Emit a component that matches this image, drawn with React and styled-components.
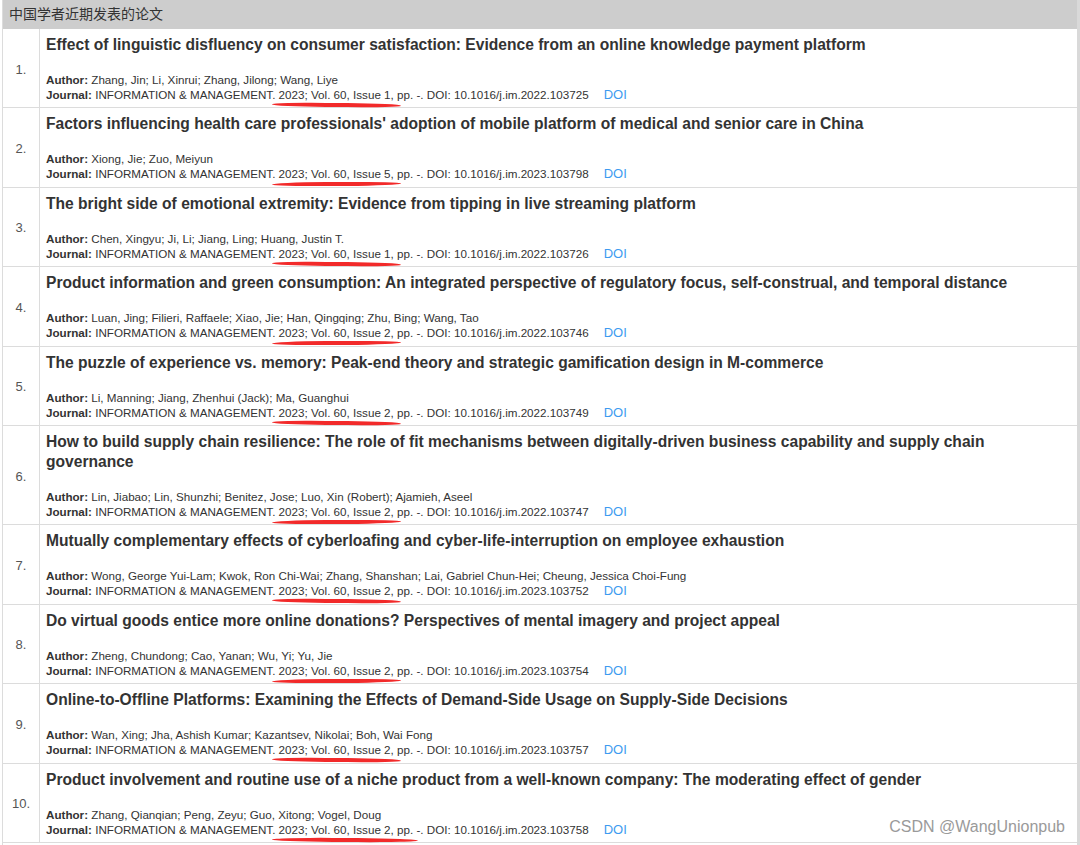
import React from 'react'
import styled, { createGlobalStyle } from 'styled-components'

const GlobalStyle = createGlobalStyle`
  html, body {
    margin: 0;
    padding: 0;
    background: #fff;
    overflow: hidden;
  }
  body {
    font-family: "Liberation Sans", Arial, "Noto Sans CJK SC", sans-serif;
    color: #333;
  }
`

const Page = styled.div`
  position: relative;
  width: 1080px;
  height: 845px;
  display: flex;
`

const Table = styled.div`
  margin-left: 2px;
  width: 1075px;
  border-left: 1px solid #dcdcdc;
  display: flex;
  flex-direction: column;
`

const Scroll = styled.div`
  width: 3px;
  background: #d9d9d9;
`

const Header = styled.div`
  height: 29px;
  background: #cdcdcd;
  font-size: 14px;
  line-height: 29px;
  padding-left: 6px;
  color: #333;
  font-family: "Liberation Sans", "Noto Sans CJK SC", sans-serif;
`

const Row = styled.div`
  display: grid;
  grid-template-columns: 37px 1fr;
  border-bottom: 1px solid #dcdcdc;
`

const Num = styled.div`
  border-right: 1px solid #dcdcdc;
  display: flex;
  align-items: center;
  justify-content: center;
  font-size: 13px;
  color: #555;
  padding-top: 2px;
`

const Body = styled.div`
  padding: 6px 12px 5.4px 6px;
`

const Title = styled.div`
  font-size: 15.6px;
  line-height: 20px;
  font-weight: bold;
  color: #333;
  margin-bottom: 17px;
`

const Line = styled.div`
  font-size: 11.65px;
  line-height: 15px;
  color: #333;
  white-space: nowrap;

  b {
    font-weight: bold;
  }
`

const Marked = styled.span`
  position: relative;

  &::after {
    content: '';
    position: absolute;
    left: -7px;
    right: ${p => p.$extend}px;
    bottom: -6px;
    height: 4px;
    background: #f22a2a;
    border-radius: 50% / 60%;
    transform: rotate(${p => p.$tilt}deg);
  }
`

const DoiLink = styled.a`
  margin-left: 15px;
  font-size: 13px;
  color: #3d9bf0;
  text-decoration: none;
`

const Watermark = styled.div`
  position: absolute;
  right: 15px;
  bottom: 9px;
  font-size: 16px;
  color: #9a9a9a;
  font-family: "Liberation Sans", Arial, sans-serif;
`

const papers = [
  {
    title: 'Effect of linguistic disfluency on consumer satisfaction: Evidence from an online knowledge payment platform',
    authors: 'Zhang, Jin; Li, Xinrui; Zhang, Jilong; Wang, Liye',
    issue: '1',
    doi: '10.1016/j.im.2022.103725',
  },
  {
    title: "Factors influencing health care professionals' adoption of mobile platform of medical and senior care in China",
    authors: 'Xiong, Jie; Zuo, Meiyun',
    issue: '5',
    doi: '10.1016/j.im.2023.103798',
  },
  {
    title: 'The bright side of emotional extremity: Evidence from tipping in live streaming platform',
    authors: 'Chen, Xingyu; Ji, Li; Jiang, Ling; Huang, Justin T.',
    issue: '1',
    doi: '10.1016/j.im.2022.103726',
  },
  {
    title: 'Product information and green consumption: An integrated perspective of regulatory focus, self-construal, and temporal distance',
    authors: 'Luan, Jing; Filieri, Raffaele; Xiao, Jie; Han, Qingqing; Zhu, Bing; Wang, Tao',
    issue: '2',
    doi: '10.1016/j.im.2022.103746',
  },
  {
    title: 'The puzzle of experience vs. memory: Peak-end theory and strategic gamification design in M-commerce',
    authors: 'Li, Manning; Jiang, Zhenhui (Jack); Ma, Guanghui',
    issue: '2',
    doi: '10.1016/j.im.2022.103749',
  },
  {
    title: 'How to build supply chain resilience: The role of fit mechanisms between digitally-driven business capability and supply chain governance',
    authors: 'Lin, Jiabao; Lin, Shunzhi; Benitez, Jose; Luo, Xin (Robert); Ajamieh, Aseel',
    issue: '2',
    doi: '10.1016/j.im.2022.103747',
  },
  {
    title: 'Mutually complementary effects of cyberloafing and cyber-life-interruption on employee exhaustion',
    authors: 'Wong, George Yui-Lam; Kwok, Ron Chi-Wai; Zhang, Shanshan; Lai, Gabriel Chun-Hei; Cheung, Jessica Choi-Fung',
    issue: '2',
    doi: '10.1016/j.im.2023.103752',
  },
  {
    title: 'Do virtual goods entice more online donations? Perspectives of mental imagery and project appeal',
    authors: 'Zheng, Chundong; Cao, Yanan; Wu, Yi; Yu, Jie',
    issue: '2',
    doi: '10.1016/j.im.2023.103754',
  },
  {
    title: 'Online-to-Offline Platforms: Examining the Effects of Demand-Side Usage on Supply-Side Decisions',
    authors: 'Wan, Xing; Jha, Ashish Kumar; Kazantsev, Nikolai; Boh, Wai Fong',
    issue: '2',
    doi: '10.1016/j.im.2023.103757',
  },
  {
    title: 'Product involvement and routine use of a niche product from a well-known company: The moderating effect of gender',
    authors: 'Zhang, Qianqian; Peng, Zeyu; Guo, Xitong; Vogel, Doug',
    issue: '2',
    doi: '10.1016/j.im.2023.103758',
    longMark: true,
  },
]

function Paper({ index, paper }) {
  return (
    <Row>
      <Num>{index}.</Num>
      <Body>
        <Title>{paper.title}</Title>
        <Line><b>Author:</b> {paper.authors}</Line>
        <Line>
          <b>Journal:</b> INFORMATION &amp; MANAGEMENT.{' '}
          {paper.longMark ? (
            <Marked $extend={-4} $tilt={0.4}>2023; Vol. 60, Issue {paper.issue}, pp.</Marked>
          ) : (
            <Marked $extend={-7} $tilt={index % 2 ? 0.6 : -0.4}>2023; Vol. 60, Issue {paper.issue},</Marked>
          )}
          {paper.longMark ? ' -. ' : ' pp. -. '}DOI: {paper.doi}
          <DoiLink href="#">DOI</DoiLink>
        </Line>
      </Body>
    </Row>
  )
}

export default function App() {
  return (
    <Page>
      <GlobalStyle />
      <Table>
        <Header>中国学者近期发表的论文</Header>
        {papers.map((p, i) => (
          <Paper key={i} index={i + 1} paper={p} />
        ))}
      </Table>
      <Scroll />
      <Watermark>CSDN @WangUnionpub</Watermark>
    </Page>
  )
}
